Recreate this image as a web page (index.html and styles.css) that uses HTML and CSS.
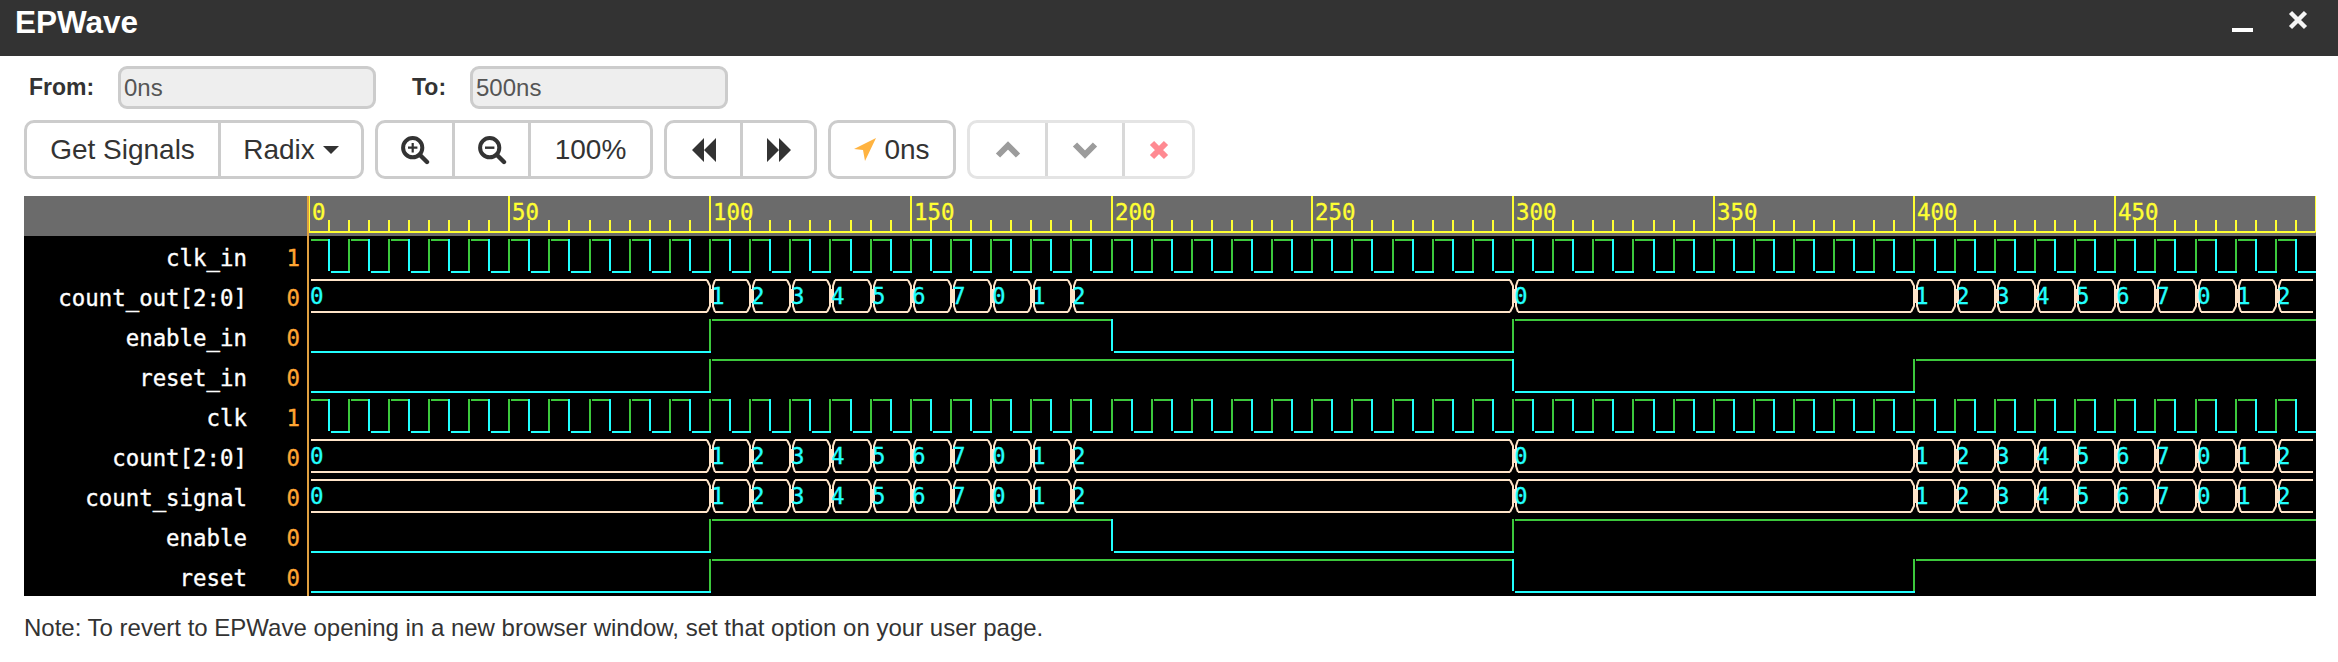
FILE: index.html
```html
<!DOCTYPE html>
<html lang="en">
<head>
  <meta charset="UTF-8">
  <title>EPWave</title>
  <link rel="stylesheet" href="styles.css">
</head>
<body>

  <div class="titlebar">
    <div class="title">EPWave</div>
    <div class="window-buttons">
      <svg class="icon-min" width="22" height="5"><rect width="21" height="4" fill="#fff"/></svg>
      <svg class="icon-close" width="20" height="20" viewBox="0 0 20 20"><path d="M2.5 2.5 L17.5 17.5 M17.5 2.5 L2.5 17.5" stroke="#f4f4f4" stroke-width="4.4" fill="none"/></svg>
    </div>
  </div>

  <div class="range-row">
    <label class="range-label label-from">From:</label>
    <input class="range-input" type="text" value="0ns" disabled>
    <label class="range-label label-to">To:</label>
    <input class="range-input" type="text" value="500ns" disabled>
  </div>

  <div class="toolbar">

    <div class="btn-group">
      <button class="btn btn-signals">Get Signals</button>
      <button class="btn btn-radix">Radix <span class="caret"></span></button>
    </div>

    <div class="btn-group">
      <button class="btn btn-icon">
        <svg width="30" height="30" viewBox="0 0 30 30"><circle cx="12.7" cy="12.7" r="9.6" fill="none" stroke="#333" stroke-width="4"/><path d="M20 20 L27 27" stroke="#333" stroke-width="4.4" stroke-linecap="round"/><path d="M12.7 8 V17.4 M8 12.7 H17.4" stroke="#333" stroke-width="2.2"/></svg>
      </button>
      <button class="btn btn-icon">
        <svg width="30" height="30" viewBox="0 0 30 30"><circle cx="12.7" cy="12.7" r="9.6" fill="none" stroke="#333" stroke-width="4"/><path d="M20 20 L27 27" stroke="#333" stroke-width="4.4" stroke-linecap="round"/><path d="M8 12.7 H17.4" stroke="#333" stroke-width="2.4"/></svg>
      </button>
      <button class="btn btn-percent">100%</button>
    </div>

    <div class="btn-group">
      <button class="btn btn-seek">
        <svg width="24" height="24" viewBox="0 0 24 24"><path d="M12 0 V24 L0 12 Z M24 0 V24 L12 12 Z" fill="#333"/></svg>
      </button>
      <button class="btn btn-seek">
        <svg width="24" height="24" viewBox="0 0 24 24"><path d="M0 0 V24 L12 12 Z M12 0 V24 L24 12 Z" fill="#333"/></svg>
      </button>
    </div>

    <div class="btn-group">
      <button class="btn btn-cursor">
        <svg width="22" height="23" viewBox="0 0 22 23"><path d="M22 0 L0 11 L9 12 L11 23 Z" fill="#ffb340"/></svg>
        0ns
      </button>
    </div>

    <div class="btn-group btn-group-disabled">
      <button class="btn btn-up">
        <svg width="26" height="18" viewBox="0 0 26 18"><path d="M3 14.5 L13 4.5 L23 14.5" fill="none" stroke="#9c9c9c" stroke-width="6"/></svg>
      </button>
      <button class="btn btn-down">
        <svg width="26" height="18" viewBox="0 0 26 18"><path d="M3 3.5 L13 13.5 L23 3.5" fill="none" stroke="#9c9c9c" stroke-width="6"/></svg>
      </button>
      <button class="btn btn-remove">
        <svg width="20" height="20" viewBox="0 0 20 20"><path d="M3 3 L17 17 M17 3 L3 17" fill="none" stroke="#ff8a92" stroke-width="6"/></svg>
      </button>
    </div>

  </div>

  <svg id="wavecanvas" class="wavecanvas" width="2292" height="400"></svg>

  <div class="note">Note: To revert to EPWave opening in a new browser window, set that option on your user page.</div>

  <script src="wave.js"></script>

</body>
</html>
```

FILE: styles.css
```css
body {
  margin: 0;
  background: #fff;
  color: #333;
  font-family: "Liberation Sans", Arial, sans-serif;
}

/* title bar */
.titlebar {
  display: flex;
  justify-content: space-between;
  height: 56px;
  padding: 0 30px 0 15px;
  background: #333;
}

.title {
  color: #fff;
  font-size: 31.5px;
  font-weight: bold;
  line-height: 44px;
}

.window-buttons {
  display: flex;
  gap: 34px;
  padding-top: 10px;
}

.icon-min {
  margin-top: 18px;
}

/* from / to */
.range-row {
  display: flex;
  align-items: center;
  height: 43px;
  margin-top: 10px;
  padding-left: 29px;
}

.range-label {
  font-size: 23px;
  font-weight: bold;
}

.label-from {
  width: 89px;
}

.label-to {
  width: 58px;
  margin-left: 36px;
}

.range-input {
  box-sizing: border-box;
  width: 258px;
  height: 43px;
  padding: 0 3px;
  background: #eee;
  border: 3px solid #ccc;
  border-radius: 9px;
  color: #555;
  font-family: inherit;
  font-size: 24px;
}

/* buttons */
.toolbar {
  display: flex;
  gap: 11px;
  margin-top: 11px;
  padding-left: 24px;
}

.btn-group {
  display: flex;
  box-sizing: border-box;
  height: 59px;
  background: #fff;
  border: 3px solid #ccc;
  border-radius: 10px;
}

.btn {
  display: flex;
  align-items: center;
  justify-content: center;
  gap: 8px;
  box-sizing: border-box;
  padding: 0;
  background: none;
  border: none;
  border-left: 3px solid #ccc;
  color: #333;
  font-family: inherit;
  font-size: 28px;
}

.btn:first-child {
  border-left: none;
}

.btn-signals {
  width: 191px;
}

.btn-radix {
  width: 143px;
}

.btn-icon {
  width: 76px;
}

.btn-icon:first-child {
  width: 74px;
}

.btn-percent {
  width: 122px;
}

.btn-seek {
  width: 74px;
}

.btn-seek:first-child {
  width: 73px;
}

.btn-cursor {
  width: 122px;
}

.btn-up {
  width: 75px;
}

.btn-down {
  width: 77px;
}

.btn-remove {
  width: 70px;
}

.btn-group-disabled,
.btn-group-disabled .btn {
  border-color: #e4e4e4;
}

.btn-group-disabled .btn {
  border-left-color: #d8d8d8;
}

.caret {
  width: 0;
  height: 0;
  border-top: 8px solid #333;
  border-left: 8px solid transparent;
  border-right: 8px solid transparent;
}

/* waveform */
.wavecanvas {
  display: block;
  margin: 17px 0 0 24px;
  background: #000;
}

.wavecanvas text {
  font-family: "DejaVu Sans Mono", "Liberation Mono", monospace;
  font-size: 22.4px;
  stroke: currentColor;
  stroke-width: 0.35px;
}

.note {
  margin-top: 16px;
  padding-left: 24px;
  font-size: 24px;
  line-height: 32px;
}
```

FILE: wave.js
```js
// draws the ruler and the signals into the svg

let wavecanvas = document.getElementById("wavecanvas");

let PANEL_W = 2292;
let HEADER_H = 40;
let ROW_H = 40;
let XSTART = 284.5;
let XSCALE = 4.015;

let GREEN = "#3cc83c";
let CYAN = "#22ffff";
let YELLOW = "#ffff33";
let BUS = "#ffe4c8";
let ORANGE = "#ffa533";

let out = "";

function xpos(t) {
  return Math.round(XSTART + t * XSCALE);
}

function rect(x, y, w, h, color) {
  out += '<rect x="' + x + '" y="' + y + '" width="' + w + '" height="' + h + '" fill="' + color + '"/>';
}

function text(x, y, str, color, anchor) {
  out += '<text x="' + x + '" y="' + y + '" fill="' + color + '" color="' + color + '" text-anchor="' + anchor + '">' + str + '</text>';
}

function drawRuler() {
  rect(0, 0, PANEL_W, HEADER_H, "#6b6b6b");
  rect(XSTART - 0.5, 35, PANEL_W - XSTART, 2, YELLOW);
  for (let t = 0; t <= 500; t += 5) {
    let x = xpos(t);
    if (t % 50 == 0) {
      rect(x - 1, 0, 2, 36, YELLOW);
      if (t < 500) text(x + 3, 24, t, YELLOW, "start");
    } else {
      rect(x - 1, 24, 2, 12, YELLOW);
    }
  }
}

// edges: list of [time, level], the first one is the start value
function drawBit(row, edges) {
  let y = HEADER_H + row * ROW_H;
  let high = y + 3;
  let low = y + 35;
  for (let i = 0; i < edges.length; i++) {
    let level = edges[i][1];
    let x1 = xpos(edges[i][0]);
    let x2 = i + 1 < edges.length ? xpos(edges[i + 1][0]) : xpos(500);
    let color = level ? GREEN : CYAN;
    if (i > 0) rect(x1 - 1, high, 2, low - high, color);
    rect(x1 + 2, level ? high : low, x2 - x1 - 1, 2, color);
  }
}

function clockEdges() {
  let edges = [];
  for (let t = 0; t < 500; t += 5) {
    edges.push([t, (t / 5 + 1) % 2]);
  }
  return edges;
}

// values: list of [time, string]
function drawBus(row, values) {
  let y = HEADER_H + row * ROW_H;
  let top = y + 4;
  let bottom = y + 36;
  let mid = y + 20;
  let d = "";
  for (let i = 0; i < values.length; i++) {
    let x1 = xpos(values[i][0]);
    let x2 = i + 1 < values.length ? xpos(values[i + 1][0]) : xpos(500);
    let first = i == 0;
    let last = i == values.length - 1;

    // top and bottom rails
    let railStart = first ? x1 + 2 : x1 + 5;
    let railEnd = x2 - 3;
    d += "M" + railStart + " " + top + " H" + railEnd + " ";
    d += "M" + railStart + " " + bottom + " H" + railEnd + " ";

    // the crossing at the end of this value
    if (!last) {
      d += "M" + (x2 - 3) + " " + top + " L" + x2 + " " + (top + 6) + " V" + (bottom - 6) + " L" + (x2 - 3) + " " + bottom + " ";
      d += "M" + (x2 + 5) + " " + top + " L" + (x2 + 3) + " " + (top + 6) + " V" + (bottom - 6) + " L" + (x2 + 5) + " " + bottom + " ";
      d += "M" + x2 + " " + (mid - 6) + " H" + (x2 + 3) + " M" + x2 + " " + (mid + 6) + " H" + (x2 + 3) + " ";
      d += "M" + (x2 + 1.5) + " " + (mid - 6) + " V" + (mid + 6) + " ";
    }
  }
  out += '<path d="' + d + '" fill="none" stroke="' + BUS + '" stroke-width="2"/>';
  for (let i = 0; i < values.length; i++) {
    text(xpos(values[i][0]) + 1, y + 28, values[i][1], CYAN, "start");
  }
}

function busValues() {
  let values = [[0, "0"]];
  let seq = ["1", "2", "3", "4", "5", "6", "7", "0", "1", "2"];
  for (let i = 0; i < 10; i++) values.push([100 + i * 10, seq[i]]);
  values.push([300, "0"]);
  for (let i = 0; i < 10; i++) values.push([400 + i * 10, seq[i]]);
  return values;
}

let enableEdges = [[0, 0], [100, 1], [200, 0], [300, 1]];
let resetEdges = [[0, 0], [100, 1], [300, 0], [400, 1]];

let signals = [
  { name: "clk_in", value: "1", bit: clockEdges() },
  { name: "count_out[2:0]", value: "0", bus: busValues() },
  { name: "enable_in", value: "0", bit: enableEdges },
  { name: "reset_in", value: "0", bit: resetEdges },
  { name: "clk", value: "1", bit: clockEdges() },
  { name: "count[2:0]", value: "0", bus: busValues() },
  { name: "count_signal", value: "0", bus: busValues() },
  { name: "enable", value: "0", bit: enableEdges },
  { name: "reset", value: "0", bit: resetEdges }
];

drawRuler();

signals.forEach((sig, row) => {
  if (sig.bus) {
    drawBus(row, sig.bus);
  } else {
    drawBit(row, sig.bit);
  }
  let base = HEADER_H + row * ROW_H + 30;
  text(223, base, sig.name, "#fff", "end");
  text(276, base, sig.value, ORANGE, "end");
});

// cursor line
rect(283, 0, 2, 400, "#e0a040");

wavecanvas.innerHTML = out;
```
